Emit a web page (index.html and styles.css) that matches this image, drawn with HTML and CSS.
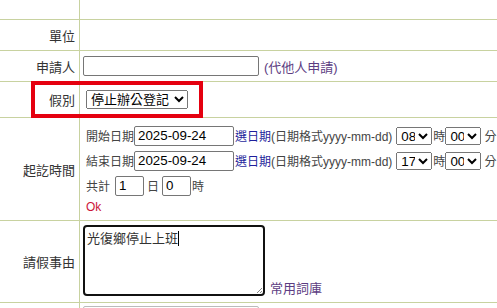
FILE: index.html
```html
<!DOCTYPE html>
<html lang="zh-Hant">
<head>
  <meta charset="UTF-8">
  <title>請假申請</title>
  <meta name="viewport" content="width=device-width, initial-scale=1.0">
  <link rel="stylesheet" href="styles.css">
</head>
<body>
<div class="form">
  <div class="row row-head">
    <div class="label"></div>
    <div class="field"></div>
  </div>
  <div class="row row-unit">
    <div class="label">單位</div>
    <div class="field"></div>
  </div>
  <div class="row row-applicant">
    <div class="label">申請人</div>
    <div class="field">
      <input type="text" class="txt-agent">
      <span class="hint">(代他人申請)</span>
    </div>
  </div>
  <div class="row row-kind">
    <div class="label">假別</div>
    <div class="field">
      <select class="sel-kind"><option>停止辦公登記</option></select>
    </div>
    <div class="mark"></div>
  </div>
  <div class="row row-time">
    <div class="label">起訖時間</div>
    <div class="field time">
      <div class="line">
        <span>開始日期</span><input type="text" class="date" value="2025-09-24"><a class="pick">選日期</a><span>(日期格式yyyy-mm-dd)</span>
        <select class="hh"><option>08</option></select><span class="unit">時</span><select class="mm"><option>00</option></select><span class="unit-m">分</span>
      </div>
      <div class="line">
        <span>結束日期</span><input type="text" class="date" value="2025-09-24"><a class="pick">選日期</a><span>(日期格式yyyy-mm-dd)</span>
        <select class="hh"><option>17</option></select><span class="unit">時</span><select class="mm"><option>00</option></select><span class="unit-m">分</span>
      </div>
      <div class="line">
        <span>共計</span><input type="text" class="num num-day" value="1"><span class="unit-d">日</span><input type="text" class="num num-hour" value="0"><span class="unit">時</span>
      </div>
      <div class="ok">Ok</div>
    </div>
  </div>
  <div class="row row-reason">
    <div class="label">請假事由</div>
    <div class="field reason">
      <div class="memo">光復鄉停止上班<span class="caret"></span>
        <svg class="grip" width="7" height="7" viewBox="0 0 7 7"><path d="M6 1L1 6M6 4L4 6" stroke="#888" stroke-width="1"/></svg>
      </div>
      <a class="phrases">常用詞庫</a>
    </div>
  </div>
  <div class="row row-next">
    <div class="label"></div>
    <div class="field next">
      <input type="text" class="txt-next">
    </div>
  </div>
</div>
</body>
</html>
```

FILE: styles.css
```css
body {
  margin: 0;
  overflow: hidden;
  background: #fff;
  color: #333;
  font-family: "Liberation Sans", "Noto Sans CJK TC", sans-serif;
  font-size: 13px;
}
.form {
  width: 640px;
}
.row {
  display: flex;
  border-bottom: 1px solid #c8d2a0;
}
.row-head { height: 19px; }
.row-unit { height: 30px; }
.row-applicant { height: 30px; }
.row-kind { height: 35px; position: relative; }
.row-time { height: 102px; }
.row-reason { height: 81px; }
.row-next { height: 30px; }
.label {
  width: 80px;
  flex: none;
  box-sizing: border-box;
  border-right: 1px solid #c8d2a0;
  padding-right: 4px;
  display: flex;
  align-items: center;
  justify-content: flex-end;
  color: #333;
  white-space: nowrap;
}
.field {
  flex: 1;
  display: flex;
  align-items: center;
  padding-left: 3px;
  white-space: nowrap;
}
input, select {
  font-family: "Liberation Sans", "Noto Sans CJK TC", sans-serif;
  font-size: 13.33px;
  margin: 0;
  color: #000;
}
input {
  box-sizing: border-box;
  height: 20px;
  border: 1px solid #767676;
  border-radius: 2px;
  padding: 1px 3px;
}
select {
  box-sizing: border-box;
}
.txt-agent { width: 176px; }
.hint {
  margin-left: 5px;
  color: #5c3d82;
}
.sel-kind {
  margin-left: 3px;
  width: 102px;
  height: 19px;
  font-size: 13px;
}
.mark {
  position: absolute;
  left: 31px;
  top: -1px;
  width: 172px;
  height: 37px;
  box-sizing: border-box;
  border: 4px solid #e5000f;
}

/* 起訖時間 */
.time {
  display: block;
  padding-top: 5px;
  font-size: 12px;
  color: #444;
}
.line {
  display: flex;
  align-items: center;
  height: 25px;
  padding-left: 3px;
}
.date { width: 100px; }
.pick {
  margin-left: 1px;
  color: #1f1f9c;
  cursor: pointer;
}
.hh {
  margin-left: 4px;
  width: 36px;
  height: 18px;
}
.mm {
  width: 36px;
  height: 18px;
}
.unit { margin-left: 1px; }
.unit-m { margin-left: 3px; }
.unit-d { margin: 0 3px; }
.num { width: 29px; }
.num-day { margin-left: 5px; }
.ok {
  padding-left: 3px;
  height: 18px;
  line-height: 18px;
  color: #cc1438;
}

/* 請假事由 */
.reason {
  align-items: flex-end;
  padding-bottom: 6px;
}
.memo {
  position: relative;
  width: 182px;
  height: 71px;
  box-sizing: border-box;
  border: 2px solid #111;
  border-radius: 4px;
  padding: 3px 2px;
  line-height: 17px;
  color: #333;
}
.caret {
  display: inline-block;
  width: 1px;
  height: 15px;
  background: #000;
  vertical-align: -3px;
}
.grip {
  position: absolute;
  right: 0;
  bottom: 0;
}
.phrases {
  margin-left: 5px;
  line-height: 14px;
  color: #5c3d82;
  cursor: pointer;
}
.next { align-items: flex-start; padding-top: 3px; }
.txt-next {
  width: 176px;
  border-color: #bbb;
}
```
